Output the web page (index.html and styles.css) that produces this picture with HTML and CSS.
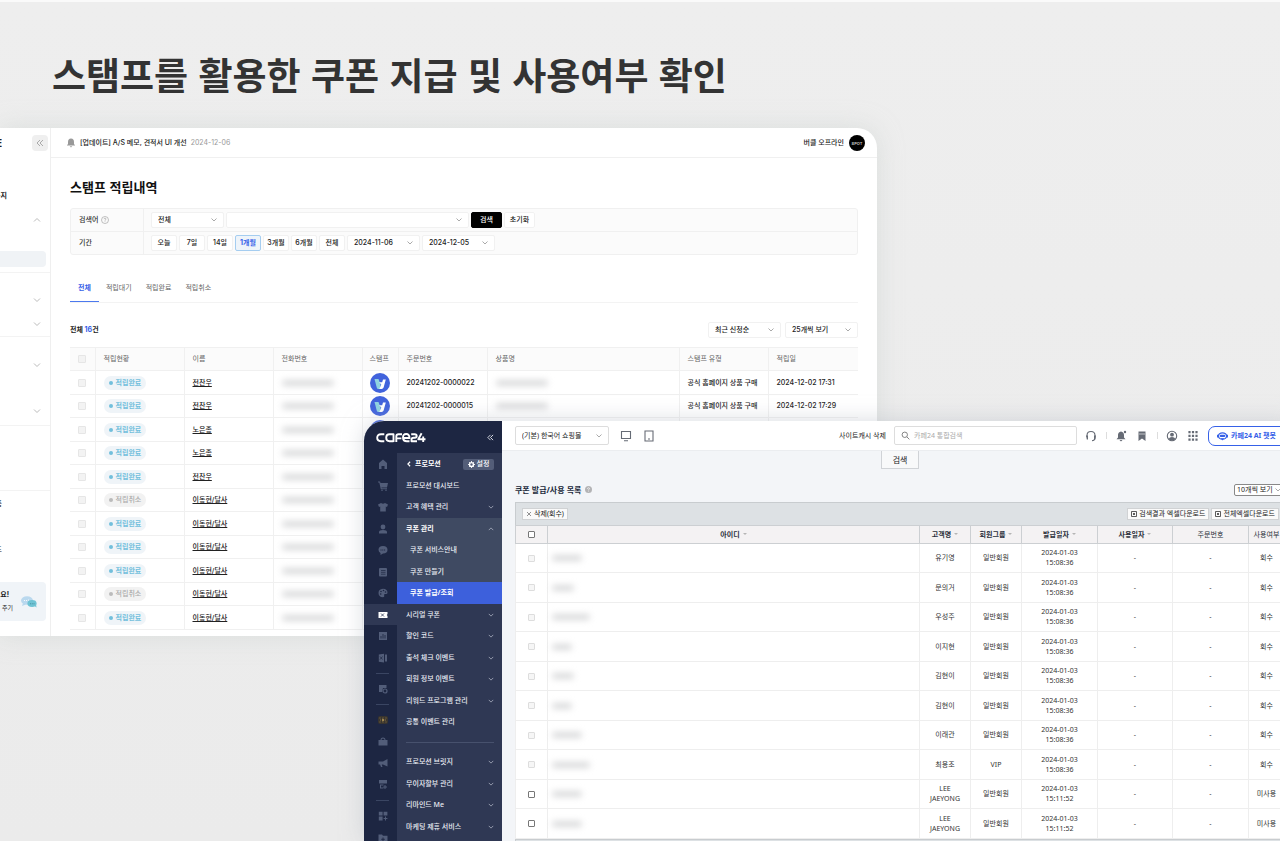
FILE: index.html
```html
<!DOCTYPE html>
<html lang="ko">
<head>
<meta charset="utf-8">
<title>스탬프를 활용한 쿠폰 지급 및 사용여부 확인</title>
<link rel="stylesheet" href="styles.css">
</head>
<body>
<svg class="defs" aria-hidden="true">
  <symbol id="down" viewBox="0 0 8 8"><path d="M1 2.500 4 5.500 7 2.500" fill="none" stroke="currentColor"/></symbol>
  <symbol id="up" viewBox="0 0 8 8"><path d="M1 5.500 4 2.500 7 5.500" fill="none" stroke="currentColor"/></symbol>
  <symbol id="dleft" viewBox="0 0 8 8"><path d="M4 1 1 4 4 7M7 1 4 4 7 7" fill="none" stroke="currentColor"/></symbol>
  <symbol id="bell" viewBox="0 0 10 10"><path d="M5 .5C3 .5 2 2 2 4v2L.8 7.600h8.400L8 6V4C8 2 7 .5 5 .5zM3.700 8.300h2.600L5 9.600z" fill="currentColor"/></symbol>
  <symbol id="vmark" viewBox="0 0 20 20"><circle cx="10" cy="10" r="10" fill="#4163dc"/><path d="M4.500 6h4l2 5.500V16H8.200q-1 0-1.400-1.200z" fill="#8fd3e0"/><path d="M9 9.200h3.200L13 6.500h2.800L13.600 14.600q-.5 1.400-2 1.400H9.300l2-4.600z" fill="#fff"/></symbol>
</svg>
<main class="board">
  <h1 class="headline">스탬프를 활용한 쿠폰 지급 및 사용여부 확인</h1>

  <section class="win stamp" aria-label="스탬프 적립내역">
    <aside class="side">
      <div class="side-top"><b class="clip">E</b><button class="fold" aria-label="접기"><svg class="i8"><use href="#dleft"/></svg></button></div>
      <div class="sec sec-a">
        <div class="nav"><b class="clip wide">공지</b></div>
        <div class="nav end"><svg class="i8"><use href="#up"/></svg></div>
        <div class="current"></div>
      </div>
      <div class="sec sec-b"><div class="nav end"><svg class="i8"><use href="#down"/></svg></div><div class="nav end"><svg class="i8"><use href="#down"/></svg></div></div>
      <div class="sec sec-c"><div class="nav end"><svg class="i8"><use href="#down"/></svg></div><div class="nav end"><svg class="i8"><use href="#down"/></svg></div></div>
      <div class="sec sec-d"></div>
      <div class="sec-e"><div class="nav"><span class="clip tiny">품</span></div><div class="nav"><span class="clip tiny">드</span></div></div>
      <div class="talk">
        <div class="talk-text"><b>요!</b><span>주기</span></div>
        <svg class="talk-icon" viewBox="0 0 16 12"><ellipse cx="6" cy="4.500" rx="6" ry="4.300" fill="#b9d8ee"/><path d="M2 7l-1 3 4-1.500z" fill="#b9d8ee"/><ellipse cx="11" cy="7.500" rx="4.600" ry="3.400" fill="#6fc3d4"/><path d="M13 9.500l2.500 2-.5-3z" fill="#6fc3d4"/><g fill="#fff"><circle cx="3.500" cy="4.500" r=".6"/><circle cx="5.500" cy="4.500" r=".6"/><circle cx="7.500" cy="4" r=".6"/></g><g fill="#3b8597"><circle cx="9.500" cy="7.700" r=".5"/><circle cx="11.200" cy="7.700" r=".5"/><circle cx="13" cy="7.700" r=".5"/></g></svg>
      </div>
    </aside>
    <div class="stamp-main">
      <header class="notice"><svg class="bell"><use href="#bell"/></svg><a href="#" class="notice-link">[업데이트] A/S 메모, 견적서 UI 개선</a><time>2024-12-06</time>
        <span class="account">버클 오프라인<svg class="avatar" viewBox="0 0 16 16"><circle cx="8" cy="8" r="8" fill="#000"/><text x="8" y="9.500" text-anchor="middle">SPOT</text></svg></span></header>
      <div class="page">
        <h2>스탬프 적립내역</h2>
        <form class="filter">
          <div class="frow"><span class="flabel">검색어 <svg class="help" viewBox="0 0 8 8"><circle cx="4" cy="4" r="3.500" fill="none" stroke="#999" stroke-width=".6"/><path d="M3 3.200q0-1 1-1t1 .9q0 .6-1 1.100v.5M4 5.400v.6" fill="none" stroke="#999" stroke-width=".6"/></svg></span>
            <div class="fields"><select class="sel" aria-label="검색 조건"><option>전체</option></select><select class="sel long" aria-label="검색어"><option></option></select><button type="button" class="btn dark">검색</button><button type="button" class="btn reset">초기화</button></div></div>
          <div class="frow"><span class="flabel">기간</span>
            <div class="fields"><button type="button" class="btn">오늘</button><button type="button" class="btn">7일</button><button type="button" class="btn">14일</button><button type="button" class="btn on">1개월</button><button type="button" class="btn">3개월</button><button type="button" class="btn">6개월</button><button type="button" class="btn">전체</button><select class="sel date" aria-label="시작일"><option>2024-11-06</option></select><select class="sel date" aria-label="종료일"><option>2024-12-05</option></select></div></div>
        </form>
        <nav class="tabs"><a href="#" class="tab active">전체</a><a href="#" class="tab">적립대기</a><a href="#" class="tab">적립완료</a><a href="#" class="tab">적립취소</a></nav>
        <div class="count"><p>전체 <em>16</em>건</p><select class="sel" aria-label="정렬"><option>최근 신청순</option></select><select class="sel" aria-label="표시 수"><option>25개씩 보기</option></select></div>
        <table class="list">
          <colgroup><col class="c25"><col class="c89"><col class="c89"><col class="c89"><col class="c36"><col class="c89"><col><col class="c89"><col class="c90"></colgroup>
          <thead><tr><th><input type="checkbox" aria-label="전체 선택"></th><th>적립현황</th><th>이름</th><th>전화번호</th><th>스탬프</th><th>주문번호</th><th>상품명</th><th>스탬프 유형</th><th>적립일</th></tr></thead>
          <tbody>
            <tr><td><input type="checkbox" aria-label="선택"></td><td><span class="pill">적립완료</span></td><td><a href="#">전찬우</a></td><td><i class="smudge"></i></td><td><svg class="v"><use href="#vmark"/></svg></td><td>20241202-0000022</td><td><i class="smudge"></i></td><td>공식 홈페이지 상품 구매</td><td>2024-12-02 17:31</td></tr>
            <tr><td><input type="checkbox" aria-label="선택"></td><td><span class="pill">적립완료</span></td><td><a href="#">전찬우</a></td><td><i class="smudge"></i></td><td><svg class="v"><use href="#vmark"/></svg></td><td>20241202-0000015</td><td><i class="smudge"></i></td><td>공식 홈페이지 상품 구매</td><td>2024-12-02 17:29</td></tr>
            <tr><td><input type="checkbox" aria-label="선택"></td><td><span class="pill">적립완료</span></td><td><a href="#">노은종</a></td><td><i class="smudge"></i></td><td><svg class="v"><use href="#vmark"/></svg></td><td></td><td></td><td></td><td></td></tr>
            <tr><td><input type="checkbox" aria-label="선택"></td><td><span class="pill">적립완료</span></td><td><a href="#">노은종</a></td><td><i class="smudge"></i></td><td></td><td></td><td></td><td></td><td></td></tr>
            <tr><td><input type="checkbox" aria-label="선택"></td><td><span class="pill">적립완료</span></td><td><a href="#">전찬우</a></td><td><i class="smudge"></i></td><td></td><td></td><td></td><td></td><td></td></tr>
            <tr><td><input type="checkbox" aria-label="선택"></td><td><span class="pill off">적립취소</span></td><td><a href="#">이동현/달사</a></td><td><i class="smudge"></i></td><td></td><td></td><td></td><td></td><td></td></tr>
            <tr><td><input type="checkbox" aria-label="선택"></td><td><span class="pill">적립완료</span></td><td><a href="#">이동현/달사</a></td><td><i class="smudge"></i></td><td></td><td></td><td></td><td></td><td></td></tr>
            <tr><td><input type="checkbox" aria-label="선택"></td><td><span class="pill">적립완료</span></td><td><a href="#">이동현/달사</a></td><td><i class="smudge"></i></td><td></td><td></td><td></td><td></td><td></td></tr>
            <tr><td><input type="checkbox" aria-label="선택"></td><td><span class="pill">적립완료</span></td><td><a href="#">이동현/달사</a></td><td><i class="smudge"></i></td><td></td><td></td><td></td><td></td><td></td></tr>
            <tr><td><input type="checkbox" aria-label="선택"></td><td><span class="pill off">적립취소</span></td><td><a href="#">이동현/달사</a></td><td><i class="smudge"></i></td><td></td><td></td><td></td><td></td><td></td></tr>
            <tr><td><input type="checkbox" aria-label="선택"></td><td><span class="pill">적립완료</span></td><td><a href="#">이동현/달사</a></td><td><i class="smudge"></i></td><td></td><td></td><td></td><td></td><td></td></tr>
          </tbody>
        </table>
      </div>
    </div>
  </section>

  <section class="win shop" aria-label="쿠폰 발급/사용 목록">
    <aside class="dark-side">
      <div class="brand">
        <svg class="cafe" viewBox="0 0 50 11" role="img" aria-label="cafe24"><g fill="none" stroke="#fff" stroke-width="1.900" stroke-linejoin="round"><path d="M8.300 2.300H5Q1.200 2.300 1.200 5.700T5 9.200h3.300M17.500 10V2.300H13.600Q10.200 2.300 10.200 5.700T13.600 9.200h3.900M20.300 10V4.600Q20.300 2.300 22.600 2.300H26M20.300 6.400H25.400M27 6h6.500Q33.500 2 30.200 2T27 5.600 30.800 9.200h2.700M35.200 2.300h3.500q2 0 2 1.700T38.700 5.800h-1q-2.200 0-2.200 1.800v1.600h5.500M45.600 1.300l-3.300 6h7.200M47.200 4.500V10"/></g></svg>
        <button class="plain" aria-label="메뉴 접기"><svg class="i7"><use href="#dleft"/></svg></button>
      </div>
      <div class="rails">
        <ul class="rail">
          <li><svg viewBox="0 0 10 10"><path d="M5 .5 9 4v6H6.500V7h-3v3H1V4z"/></svg></li>
          <li><svg viewBox="0 0 10 10"><path d="M0 .5h2l.5 1.500H10L9 6.500H3.500l.2.800H9v1H2.800L1.300 1.500H0z"/><circle cx="4" cy="9.200" r=".8"/><circle cx="8" cy="9.200" r=".8"/></svg></li>
          <li><svg viewBox="0 0 10 10"><path d="M3 1q2 1.500 4 0l3 1.500L9 5 7.800 4.500V9.500H2.200v-5L1 5 0 2.500z"/></svg></li>
          <li><svg viewBox="0 0 10 10"><circle cx="5" cy="3" r="2.400"/><path d="M1 9.500V8q0-2 4-2t4 2v1.500z"/></svg></li>
          <li><svg viewBox="0 0 10 10"><path d="M5 1q4.500 0 4.500 3.800T5 8.600L2.500 10V8Q.5 7 .5 4.800.5 1 5 1z"/><path d="M2.500 5h5" stroke="#1d2642" stroke-dasharray="1 .8"/></svg></li>
          <li><svg viewBox="0 0 10 10"><rect x="1" y="1" width="8" height="8.500" rx="1"/><path d="M3 3.500h4.500M3 5.300h4.500M3 7.200h4.500" stroke="#1d2642" stroke-width=".7"/></svg></li>
          <li><svg viewBox="0 0 10 10"><path d="M5 .7q4.500.3 4.500 4Q9.500 6.500 7 6q-1.500 0-.8 1.500Q6.800 9.300 5 9.300.5 9 .5 5T5 .7z"/><g fill="#1d2642"><circle cx="3" cy="3.500" r=".8"/><circle cx="5.500" cy="2.500" r=".8"/><circle cx="2.700" cy="6" r=".8"/><circle cx="7.500" cy="4" r=".8"/></g></svg></li>
          <li class="on"><svg viewBox="0 0 10 10"><path d="M.5 2h9v2q-1.500 1 0 2v2h-9z"/><path d="M3 3.500l3 3m0-3l-3 3" stroke="#2f3854" stroke-width=".8"/></svg></li>
          <li><svg viewBox="0 0 10 10"><rect x="1" y="1" width="8" height="8"/><path d="M3 7.500V5M5 7.500V3M7 7.500V4" stroke="#1d2642" stroke-width=".8"/></svg></li>
          <li><svg viewBox="0 0 10 10"><path d="M.8 1.500 6 .8v8.700L.8 8.700zM7 1.500h2v7H7z"/><path d="M2 3.500l2.500 3m0-3L2 6.500" stroke="#1d2642" stroke-width=".7"/></svg></li>
          <li class="bar"></li>
          <li><svg viewBox="0 0 10 10"><path d="M1 1h7.500v3H5L4 8H1z"/><circle cx="7" cy="7" r="2" fill="none" stroke="#525d79" stroke-width="1.200"/></svg></li>
          <li class="bar"></li>
          <li><svg viewBox="0 0 10 10"><rect x="0" y="1" width="10" height="8" rx="2" fill="#38342f"/><path d="M1.500 3h1m2 0h1m2 0h1M1.500 7h1m2 0h1m2 0h1M2 5h1m4 0h1" stroke="#8d7442"/><path d="M4.300 3.500v3L6.500 5z" fill="#c9a861"/></svg></li>
          <li><svg viewBox="0 0 10 10"><path d="M.5 4h9v5.500h-9zM2.500 4q0-2.500 2.500-2.500T7.500 4h-1Q6.500 2.500 5 2.500T3.500 4z"/></svg></li>
          <li><svg viewBox="0 0 10 10"><path d="M9.500 1v7.500L5 6.500H3.800L4.500 9H3L2 6.500H.5v-3H5z"/></svg></li>
          <li><svg viewBox="0 0 10 10"><path d="M1 1h8v3.500H1zM2 5.500h3.500v1H3v2h2.500v1H2zM7.500 6v1.500H9v1H7.500V10h-1V8.500H5.300v-1h1.200V6z"/></svg></li>
          <li class="bar"></li>
          <li><svg viewBox="0 0 10 10"><path d="M.8.8h3.800v3.800H.8zM5.600.8h3.800v3.800H5.600zM.8 5.600h3.800v3.800H.8zM7 5.600h1V7h1.400v1H8v1.400H7V8H5.600V7H7z"/></svg></li>
          <li><svg viewBox="0 0 10 10"><path d="M.5 1.500H4l1 1.200h4.500V9.500h-9z"/><path d="M5 4.500v3.600M3.200 6.300h3.600" stroke="#1d2642" stroke-width=".9"/></svg></li>
        </ul>
        <ul class="menu">
          <li class="bold"><svg class="i6" viewBox="0 0 8 8"><path d="M5.500 1 2.500 4l3 3" fill="none" stroke="#fff" stroke-width="1.500"/></svg><a href="#" class="grow">프로모션</a><button class="gear"><svg class="i7" viewBox="0 0 8 8"><circle cx="4" cy="4" r="2.200" fill="none" stroke="#fff" stroke-width="1.600"/><path d="M4 0v1.500M4 6.500V8M0 4h1.500M6.500 4H8M1.200 1.200l1 1M5.800 5.800l1 1M6.800 1.200l-1 1M2.200 5.800l-1 1" stroke="#fff"/></svg>설정</button></li>
          <li><a href="#">프로모션 대시보드</a></li>
          <li><a href="#">고객 혜택 관리</a><svg class="i6"><use href="#down"/></svg></li>
          <li class="open bold"><a href="#">쿠폰 관리</a><svg class="i6"><use href="#up"/></svg></li>
          <li class="open sub"><a href="#">쿠폰 서비스안내</a></li>
          <li class="open sub"><a href="#">쿠폰 만들기</a></li>
          <li class="picked sub"><a href="#">쿠폰 발급/조회</a></li>
          <li><a href="#">시리얼 쿠폰</a><svg class="i6"><use href="#down"/></svg></li>
          <li><a href="#">할인 코드</a><svg class="i6"><use href="#down"/></svg></li>
          <li><a href="#">출석 체크 이벤트</a><svg class="i6"><use href="#down"/></svg></li>
          <li><a href="#">회원 정보 이벤트</a><svg class="i6"><use href="#down"/></svg></li>
          <li><a href="#">리워드 프로그램 관리</a><svg class="i6"><use href="#down"/></svg></li>
          <li><a href="#">공통 이벤트 관리</a></li>
          <li class="split"></li>
          <li><a href="#">프로모션 브릿지</a><svg class="i6"><use href="#down"/></svg></li>
          <li><a href="#">무이자할부 관리</a><svg class="i6"><use href="#down"/></svg></li>
          <li><a href="#">리마인드 Me</a><svg class="i6"><use href="#down"/></svg></li>
          <li><a href="#">마케팅 제휴 서비스</a><svg class="i6"><use href="#down"/></svg></li>
        </ul>
      </div>
    </aside>
    <div class="shop-main">
      <header class="bar-top">
        <select class="mall" aria-label="쇼핑몰"><option>(기본) 한국어 쇼핑몰</option></select>
        <svg class="dev" viewBox="0 0 12 12"><path d="M1.500 1.500h9v7h-9zM4 10.800h4" fill="none" stroke="#666b75" stroke-width="1.100"/></svg>
        <svg class="dev" viewBox="0 0 12 12"><path d="M2 1h8v10H2zM5 9h2" fill="none" stroke="#666b75" stroke-width="1.100"/></svg>
        <a href="#" class="cache">사이트캐시 삭제</a>
        <label class="search"><svg viewBox="0 0 10 10"><circle cx="4.200" cy="4.200" r="3" fill="none" stroke="#777"/><path d="M6.500 6.500 9.300 9.300" stroke="#777"/></svg><input type="text" placeholder="카페24 통합검색" aria-label="통합검색"></label>
        <div class="tools">
          <svg viewBox="0 0 12 12"><path d="M2 7V5.500Q2 1.500 6 1.500T10 5.500V8q0 2.500-3 2.700" fill="none" stroke="#666b75" stroke-width="1.100"/><path d="M1 5.500h2v4H1.800zM9 5.500h2l-.8 4H9z" fill="#666b75"/></svg>
          <i></i>
          <svg viewBox="0 0 12 12"><path d="M6 1.500Q3 2 3 5v2.500L1.500 9.300h9L9 7.500V5Q9 2 6 1.500zM4.500 10h3L6 11.500z" fill="#666b75"/><circle cx="10" cy="2" r="1.200" fill="#666b75"/></svg>
          <svg viewBox="0 0 12 12"><path d="M2.500 1.500h7V11L6 8.500 2.500 11z" fill="#666b75"/><path d="M3 4h6" stroke="#fff" stroke-width=".6"/></svg>
          <i></i>
          <svg viewBox="0 0 12 12"><circle cx="6" cy="6" r="4.700" fill="none" stroke="#666b75" stroke-width="1.100"/><circle cx="6" cy="4.700" r="1.900" fill="#666b75"/><path d="M2.500 9q1-2 3.500-2t3.500 2q-1.500 1.800-3.500 1.800T2.500 9z" fill="#666b75"/></svg>
          <svg viewBox="0 0 12 12"><path d="M2.500 1v10M6 1v10M9.500 1v10" stroke="#666b75" stroke-width="2.200" stroke-dasharray="2.200 1.600"/></svg>
        </div>
        <button class="ai"><svg viewBox="0 0 12 10"><ellipse cx="6" cy="5" rx="4.500" ry="3.500" fill="none" stroke="#3661e8" stroke-width="1.400"/><path d="M0 3.500h1.200v3H0zM10.800 3.500H12v3h-1.200zM4 7.500h4L6 10z" fill="#3661e8"/><rect x="3" y="3.500" width="6" height="2.500" rx="1" fill="#3661e8"/></svg>카페24 AI 챗봇</button>
      </header>
      <div class="shop-page">
        <button class="find">검색</button>
        <div class="heading"><h2>쿠폰 발급/사용 목록</h2><svg class="q" viewBox="0 0 8 8"><circle cx="4" cy="4" r="4" fill="#b3b3b5"/><path d="M2.800 3.200q0-1.200 1.200-1.200t1.200 1q0 .7-1.200 1.300v.5M4 5.500v.8" fill="none" stroke="#fff" stroke-width=".8"/></svg><select class="per" aria-label="표시 수"><option>10개씩 보기</option></select></div>
        <div class="toolbar"><button class="mini grow-right"><svg viewBox="0 0 6 6"><path d="M1 1l4 4M5 1 1 5" stroke="#777" stroke-width=".8"/></svg>삭제(회수)</button><button class="mini"><svg viewBox="0 0 6 6"><path d="M.5.5h5v5h-5zM2 2l2 2M4 2 2 4" fill="none" stroke="#333" stroke-width=".8"/></svg>검색결과 엑셀다운로드</button><button class="mini"><svg viewBox="0 0 6 6"><path d="M.5.5h5v5h-5zM2 2l2 2M4 2 2 4" fill="none" stroke="#333" stroke-width=".8"/></svg>전체엑셀다운로드</button></div>
        <table class="coupons">
          <colgroup><col class="k32"><col><col class="k51"><col class="k51"><col class="k76"><col class="k75"><col class="k76"><col class="k36"></colgroup>
          <thead><tr><th><input type="checkbox" aria-label="전체 선택"></th><th class="sort">아이디</th><th class="sort">고객명</th><th class="sort">회원그룹</th><th class="sort">발급일자</th><th class="sort">사용일자</th><th class="light">주문번호</th><th class="light">사용여부</th></tr></thead>
          <tbody>
            <tr><td><input type="checkbox" disabled aria-label="선택"></td><td><i class="smudge w30"></i></td><td>유기영</td><td>일반회원</td><td>2024-01-03<br>15:08:36</td><td>-</td><td>-</td><td>회수</td></tr>
            <tr><td><input type="checkbox" disabled aria-label="선택"></td><td><i class="smudge w22"></i></td><td>문의거</td><td>일반회원</td><td>2024-01-03<br>15:08:36</td><td>-</td><td>-</td><td>회수</td></tr>
            <tr><td><input type="checkbox" disabled aria-label="선택"></td><td><i class="smudge w40"></i></td><td>우성주</td><td>일반회원</td><td>2024-01-03<br>15:08:36</td><td>-</td><td>-</td><td>회수</td></tr>
            <tr><td><input type="checkbox" disabled aria-label="선택"></td><td><i class="smudge w20"></i></td><td>이지현</td><td>일반회원</td><td>2024-01-03<br>15:08:36</td><td>-</td><td>-</td><td>회수</td></tr>
            <tr><td><input type="checkbox" disabled aria-label="선택"></td><td><i class="smudge w22"></i></td><td>김현이</td><td>일반회원</td><td>2024-01-03<br>15:08:36</td><td>-</td><td>-</td><td>회수</td></tr>
            <tr><td><input type="checkbox" disabled aria-label="선택"></td><td><i class="smudge w20"></i></td><td>김현이</td><td>일반회원</td><td>2024-01-03<br>15:08:36</td><td>-</td><td>-</td><td>회수</td></tr>
            <tr><td><input type="checkbox" disabled aria-label="선택"></td><td><i class="smudge w30"></i></td><td>이래관</td><td>일반회원</td><td>2024-01-03<br>15:08:36</td><td>-</td><td>-</td><td>회수</td></tr>
            <tr><td><input type="checkbox" disabled aria-label="선택"></td><td><i class="smudge w40"></i></td><td>최용조</td><td>VIP</td><td>2024-01-03<br>15:08:36</td><td>-</td><td>-</td><td>회수</td></tr>
            <tr><td><input type="checkbox" aria-label="선택"></td><td><i class="smudge w30"></i></td><td>LEE JAEYONG</td><td>일반회원</td><td>2024-01-03<br>15:11:52</td><td>-</td><td>-</td><td>미사용</td></tr>
            <tr><td><input type="checkbox" aria-label="선택"></td><td><i class="smudge w30"></i></td><td>LEE JAEYONG</td><td>일반회원</td><td>2024-01-03<br>15:11:52</td><td>-</td><td>-</td><td>미사용</td></tr>
          </tbody>
        </table>
        <div class="toolbar foot"></div>
      </div>
    </div>
  </section>
</main>
</body>
</html>
```
FILE: styles.css
```css
*{box-sizing:border-box}
body,h1,h2,p,ul{margin:0;padding:0}
ul{list-style:none}
a{color:inherit;text-decoration:none}
button,select,input{font:inherit;color:inherit;margin:0}
button{padding:0;border:0;background:none}
table{border-collapse:collapse;table-layout:fixed;width:100%}
svg{display:block;flex:none}
.defs{position:absolute;width:0;height:0}
.i8{width:8px;height:8px}
.i7{width:7px;height:7px}
.i6{width:6px;height:6px}

.board{position:relative;height:100vh;overflow:hidden;border-top:2px solid #fafafa;background:linear-gradient(#eee,#ebebeb);font:7px/10px Inter,"Noto Sans CJK KR",sans-serif;color:#222}
.headline{padding:44px 52px;font:700 37px/56px "Noto Sans CJK KR",sans-serif;color:#333}
.win{position:absolute;overflow:hidden}

/* stamp history window */
.stamp{left:0;top:126px;width:877px;height:508px;display:flex;border-radius:0 20px 0 0;background:#fff;box-shadow:0 0 24px #c9d0cd88}
.side{width:51px;flex:none;border-right:1px solid #efefef;color:#222}
.side-top{height:29px;display:flex;align-items:center;justify-content:space-between;padding-right:2px}
.fold{width:16px;height:16px;border-radius:4px;background:#efefef;color:#aaa;display:grid;place-items:center}
.clip{display:flex;justify-content:flex-end;width:2px;overflow:hidden;font-size:10px;white-space:nowrap}
.clip.wide{width:7px;font-size:7px}
.clip.tiny{width:2px;font-size:7px}
.nav{height:24px;display:flex;align-items:center;padding-right:9px;color:#222}
.nav.end{justify-content:flex-end;color:#bbb}
.sec{border-bottom:1px solid #f3f3f3}
.sec-a{padding:27px 4px 5px 0}
.sec-a .nav{padding-right:5px}
.current{height:16px;margin-top:19px;border-radius:0 4px 4px 0;background:#f0f3f6}
.sec-b{padding-top:15px}
.sec-c{padding:16px 0 2px;display:grid;gap:22px}
.sec-d{height:65px}
.sec-e{padding-top:1px;display:grid;gap:22px}
.talk{height:39px;margin:20px 4px 0 0;padding-right:9px;display:flex;align-items:center;justify-content:space-between;border-radius:0 4px 4px 0;background:#f0f4f8}
.talk-text{display:grid;gap:3px;width:13px;overflow:hidden;justify-items:end;font-size:6px}
.talk-text b{font-size:7px;margin-right:4px}
.talk-icon{width:16px;height:12px}
.stamp-main{flex:1;min-width:0}
.notice{height:30px;display:flex;align-items:center;gap:4px;padding:0 12px 0 15px;border-bottom:1px solid #f0f0f0}
.bell{width:10px;height:10px;color:#999}
.notice time{color:#999;font-size:7px}
.notice-link{font-weight:500}
.account{margin-left:auto;display:flex;align-items:center;gap:5px;font-weight:500}
.avatar{width:16px;height:16px}
.avatar text{font:700 4px Inter,sans-serif;fill:#bbb}
.page{padding:19px 19px 0}
.page h2{font:700 13px/20px "Noto Sans CJK KR",sans-serif;color:#111}
.filter{margin-top:11px;border:1px solid #f0f0f0;border-radius:3px;background:#fbfbfb}
.frow{display:flex;height:22px}
.frow+.frow{border-top:1px solid #f0f0f0;height:23px}
.flabel{width:73px;padding-left:8px;display:flex;align-items:center;gap:3px;border-right:1px solid #f0f0f0;color:#333;font-weight:500}
.help{width:8px;height:8px}
.fields{display:flex;align-items:center;gap:2px;padding-left:7px}
.sel,.mall,.per{appearance:none;border:1px solid #f1f1f1;border-radius:2px;background:#fff url("data:image/svg+xml,%3Csvg xmlns='http://www.w3.org/2000/svg' width='8' height='8'%3E%3Cpath d='M1.500 2.500 4 5 6.500 2.500' fill='none' stroke='%23aaa'/%3E%3C/svg%3E") no-repeat right 5px center}
.sel{width:73px;height:16px;padding:0 6px;line-height:12px;font-weight:500}
.sel.long{width:243px}
.btn{width:26px;height:16px;border:1px solid #f1f1f1;border-radius:2px;background:#fff;text-align:center;font-weight:500}
.btn.on{border-color:#a5cdf0;background:#eef4fa;color:#3661e8;font-weight:700}
.btn.dark{width:31px;border-color:#000;background:#000;color:#fff}
.btn.reset{width:31px}
.tabs{margin-top:19px;height:29px;display:flex;border-bottom:1px solid #f3f3f3}
.tab{padding:9px 7px 0;color:#666}
.tab.active{padding:9px 8px 0;border-bottom:1px solid #4c79ee;color:#3661e8;font-weight:700}
.count{margin:19px 0 9px;display:flex;align-items:center;gap:4px}
.count p{margin-right:auto;font-weight:700;color:#222}
.count em{font-style:normal;color:#3661e8}
.c25{width:25px}.c36{width:36px}.c89{width:89px}.c90{width:90px}
.list th,.list td{padding:0 8px;border-right:1px solid #f0f0f0;border-bottom:1px solid #f0f0f0;text-align:left;white-space:nowrap}
.list th:last-child,.list td:last-child{border-right:0}
.list thead th{height:23px;border-top:1px solid #f0f0f0;background:#fbfbfb;color:#666;font-weight:400}
.list tbody tr{height:24px;font-weight:500}
.list tbody tr:nth-child(even){height:23px}
.list td a{text-decoration:underline}
.list td:nth-child(5),.list th:nth-child(5){padding:0 7px}
.list input,.coupons input{appearance:none;display:block;width:8px;height:8px;margin:0 auto;border:1px solid #e6e6e6;border-radius:1px;background:#f3f3f3}
.pill{display:flex;width:max-content;align-items:center;gap:3px;height:14px;padding:0 5px;border-radius:7px;background:#eff4f8;color:#72bfdc;font-weight:700}
.pill::before{content:"";width:4px;height:4px;border-radius:2px;background:#72bfdc}
.pill.off{background:#f2f2f2;color:#aaa;font-weight:500}
.pill.off::before{background:#bbb}
.smudge{display:block;width:52px;height:6px;border-radius:3px;background:#d9dadb;filter:blur(3px)}
.v{width:20px;height:20px}

/* shop admin window */
.shop{left:364px;right:-14px;top:419px;bottom:0;display:flex;border-radius:20px 0 0 0;background:#f3f5f8;box-shadow:0 0 22px #b5bcc488;font-family:"Noto Sans","Noto Sans CJK KR",sans-serif}
.dark-side{width:138px;flex:none;display:flex;flex-direction:column;background:#1d2642;color:#eceef4}
.brand{height:32px;flex:none;display:flex;align-items:center;justify-content:space-between;padding:0 8px 0 12px}
.cafe{width:50px;height:11px}
.rails{flex:1;display:flex}
.rail{width:33px;flex:none}
.rail li{height:22px;display:grid;place-items:center;padding-left:4px;fill:#525d79}
.rail li:nth-child(even){height:21px}
.rail svg{width:10px;height:10px}
.rail .on{background:#2f3854;fill:#fff;height:22px}
.rail .bar,.rail .bar:nth-child(even){height:10px}
.bar::before{content:"";width:13px;border-top:1px solid #3a4562}
.menu{flex:1;background:#2f3854;font-weight:500}
.menu li{height:22px;display:flex;align-items:center;justify-content:space-between;padding:0 8px 0 9px;white-space:nowrap}
.menu li:nth-child(even){height:21px}
.menu .bold{font-weight:700;color:#fff}
.menu .open{background:#3f4a62}
.menu .sub{padding-left:13px}
.menu .picked{background:#3d60dc;color:#fff;font-weight:700}
.menu .split,.menu .split:nth-child(even){height:18px}
.split::before{content:"";width:100%;border-top:1px solid #47516d}
.menu .i6{color:#b4bac8}
.menu .grow{margin:0 auto 0 3px}
.gear{width:31px;height:11px;border-radius:2px;background:#535d78;display:flex;align-items:center;justify-content:center;gap:2px;font-weight:500}
.shop-main{flex:1;min-width:0}
.bar-top{height:30px;display:flex;align-items:center;padding:0 6px 0 13px;background:#fff;border-bottom:1px solid #ebedf0}
.mall{width:94px;height:19px;padding:0 6px;border-color:#ddd;line-height:15px}
.dev{width:12px;height:12px;margin-left:11px}
.cache{margin-left:auto}
.search{width:183px;height:19px;margin-left:8px;padding:0 6px;display:flex;align-items:center;gap:4px;border:1px solid #ddd;border-radius:2px}
.search svg{width:9px;height:9px}
.search input{flex:1;min-width:0;border:0;padding:0;background:none;outline:0}
.search input::placeholder{color:#aaa;opacity:1}
.tools{width:131px;display:flex;align-items:center;justify-content:space-between;padding:0 9px 0 8px}
.tools svg{width:12px;height:12px}
.tools i{width:1px;height:7px;background:#ddd}
.ai{width:80px;height:20px;border:1px solid #3661e8;border-radius:7px;display:flex;align-items:center;gap:3px;padding-left:8px;color:#3661e8;font-weight:700;white-space:nowrap}
.ai svg{width:11px;height:10px}
.shop-page{padding:0 9px 0 13px}
.find{display:block;width:38px;height:18px;margin:0 auto;border:1px solid #d0d3d7;border-top:0;background:#f8f9fa;font-size:8px}
.heading{height:33px;padding-top:8px;display:flex;align-items:center;gap:4px}
.heading h2{font-size:8px;line-height:12px;font-weight:700;color:#222b3c}
.q{width:7px;height:7px}
.per{width:51px;height:12px;margin-left:auto;padding:0 2px;border-color:#888;background-position:right 2px center;line-height:9px}
.toolbar{height:23px;padding:0 5px 0 6px;display:flex;align-items:center;gap:2px;border:1px solid #c8cccf;border-bottom:0;background:#dde1e4}
.toolbar.foot{height:12px;border-bottom:1px solid #c8cccf}
.mini{height:12px;padding:0 3px;display:flex;align-items:center;gap:2px;border:1px solid #d0d2d4;background:#fafafa;white-space:nowrap}
.mini svg{width:6px;height:6px}
.grow-right{margin-right:auto}
.coupons{background:#fff}
.k32{width:32px}.k51{width:51px}.k75{width:75px}.k76{width:76px}.k36{width:36px}
.coupons th{height:18px;padding:0;border:1px solid #cccfd2;background:#f4f2f3;color:#2a2f3a;font-weight:700;white-space:nowrap}
.coupons th.light{font-weight:400}
.coupons tbody tr{height:29px}
.coupons tbody tr:nth-child(even){height:30px}
.sort::after{content:"";display:inline-block;margin:0 0 2px 3px;border:2px solid transparent;border-top-color:#b5b5b5;border-bottom:0}
.coupons td{padding:0 4px;border:1px solid #eee;text-align:center;color:#333}
.coupons input{width:7px;height:7px;border-color:#777;background:#fff}
.coupons input:disabled{border-color:#ddd;background:#f6f6f6}
.w20{width:20px}.w22{width:22px}.w30{width:30px}.w40{width:38px}
```
